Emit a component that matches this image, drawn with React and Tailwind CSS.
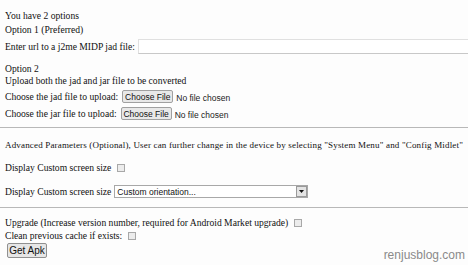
import React from "react";

const serif = "font-['Liberation_Serif',serif]";
const sans = "font-['Liberation_Sans',Arial,sans-serif]";

function Checkbox() {
  return <span className="inline-block w-[8px] h-[8px] border border-[#a8a8a8] bg-[#ececec] ml-[6px] shrink-0" />;
}

function FileRow({ label, btnClass }) {
  return (
    <div className="flex items-center h-[17px] whitespace-nowrap">
      <span>{label}</span>
      <span
        className={`${sans} ${btnClass} inline-flex items-center justify-center shrink-0 h-[13px] w-[51px] border border-[#a0a0a0] rounded-[2px] bg-[#e8e8e8] text-[8.5px] text-[#111]`}
      >
        Choose File
      </span>
      <span className={`${sans} text-[8.5px] text-[#222] ml-[3px] mt-[2px]`}>No file chosen</span>
    </div>
  );
}

export default function App() {
  return (
    <div className={`${serif} relative w-[468px] h-[265px] overflow-hidden bg-[#fdfdfd] text-[9.6px] leading-[12px] text-[#111] pl-[5px] pt-[10px] whitespace-nowrap`}>
      <div>You have 2 options</div>
      <div className="mt-[2px]">Option 1 (Preferred)</div>
      <div className="flex items-center mt-[3px] h-[15px]">
        <span className="shrink-0">Enter url to a j2me MIDP jad file:</span>
        <span className="ml-[3px] h-[15px] w-[340px] shrink-0 border-t border-l border-t-[#e0e0e0] border-l-[#e0e0e0] border-b border-b-[#c8c8c8] bg-white" />
      </div>

      <div className="mt-[9px]">Option 2</div>
      <div>Upload both the jad and jar file to be converted</div>
      <div className="mt-px">
        <FileRow label="Choose the jad file to upload:" btnClass="ml-[4px]" />
        <FileRow label="Choose the jar file to upload:" btnClass="ml-[4px]" />
      </div>

      <div className="mt-[5px] -ml-[5px] h-px bg-[#b8b8b8]" />

      <div className="mt-[11px] text-[9px] tracking-[0.17px]">
        Advanced Parameters (Optional), User can further change in the device by selecting "System Menu" and "Config Midlet"
      </div>

      <div className="mt-[11px] flex items-center h-[12px]">
        <span>Display Custom screen size</span>
        <Checkbox />
      </div>

      <div className="mt-[11px] flex items-center h-[13px]">
        <span>Display Custom screen size</span>
        <span className={`${sans} ml-[3px] flex items-center shrink-0 w-[194px] h-[13px] border border-[#a8a8a8] bg-white text-[8.5px] text-[#111]`}>
          <span className="flex-1 pl-[2px]">Custom orientation...</span>
          <span className="w-[11px] h-[11px] border border-[#9a9a9a] bg-[#e4e4e4] flex items-center justify-center">
            <svg width="5" height="3" viewBox="0 0 5 3"><path d="M0 0h5L2.5 3z" fill="#111" /></svg>
          </span>
        </span>
      </div>

      <div className="mt-[9px] -ml-[5px] h-px bg-[#b8b8b8]" />

      <div className="mt-[9px] flex items-center h-[12px]">
        <span>Upgrade (Increase version number, required for Android Market upgrade)</span>
        <Checkbox />
      </div>
      <div className="flex items-center h-[12px] mt-px">
        <span>Clean previous cache if exists:</span>
        <Checkbox />
      </div>
      <div className="mt-px">
        <span className={`${sans} ml-[2px] inline-flex items-center justify-center w-[40px] h-[15px] border border-[#909090] rounded-[2px] bg-[#e6e6e6] text-[10px] text-[#111]`}>
          Get Apk
        </span>
      </div>

      <div className={`${sans} absolute right-[3px] bottom-[3px] text-[12px] leading-[14px] text-[#8a8a8a]`}>renjusblog.com</div>
    </div>
  );
}
